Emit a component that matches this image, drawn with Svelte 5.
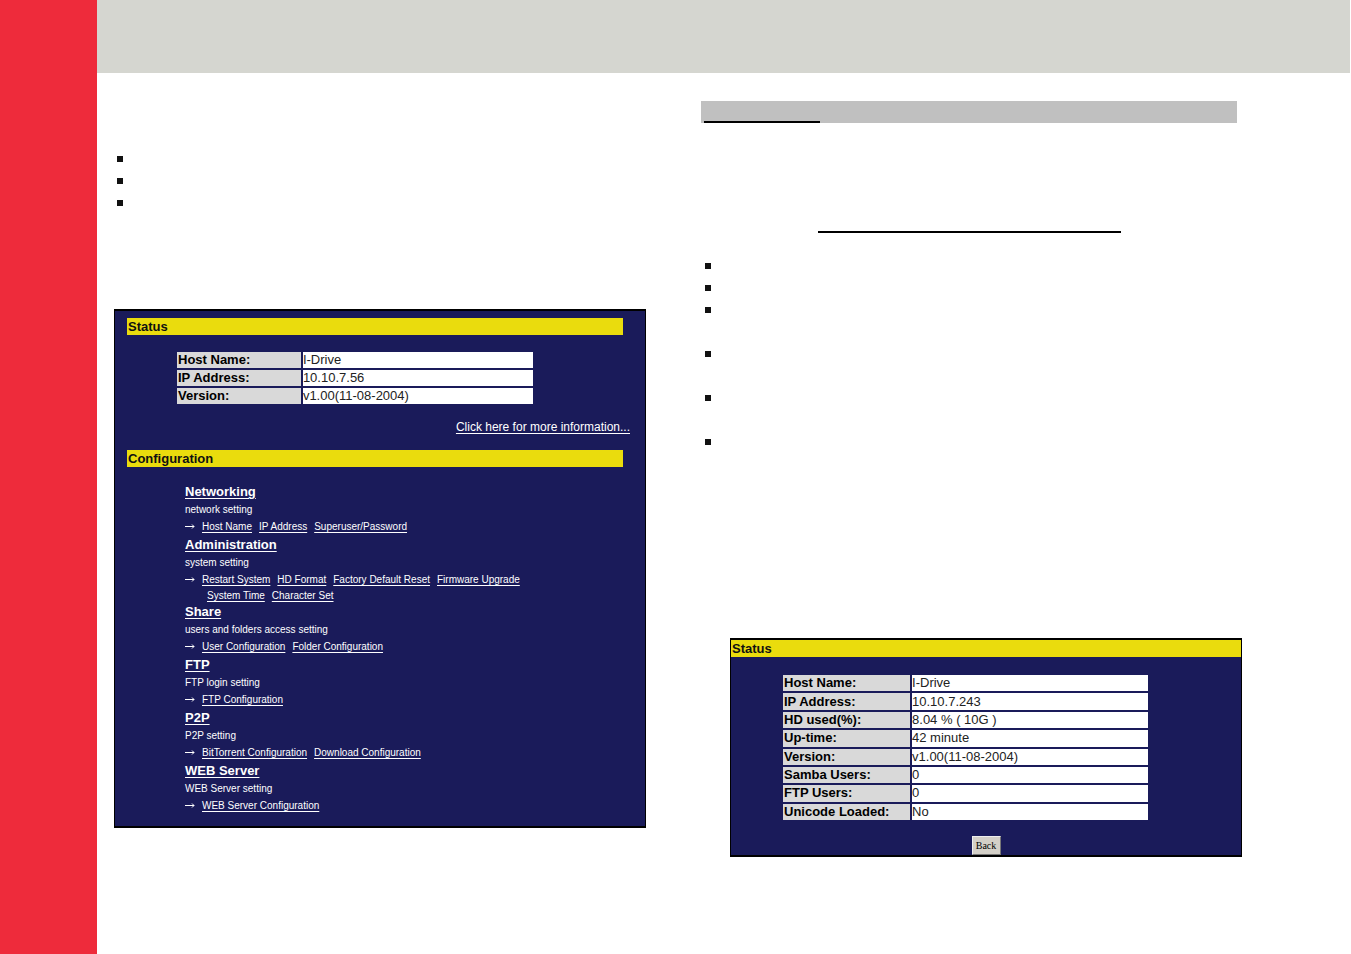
<script>
  const summary = [
    ['Host Name:', 'I-Drive'],
    ['IP Address:', '10.10.7.56'],
    ['Version:', 'v1.00(11-08-2004)']
  ];

  const details = [
    ['Host Name:', 'I-Drive'],
    ['IP Address:', '10.10.7.243'],
    ['HD used(%):', '8.04 % ( 10G )'],
    ['Up-time:', '42 minute'],
    ['Version:', 'v1.00(11-08-2004)'],
    ['Samba Users:', '0'],
    ['FTP Users:', '0'],
    ['Unicode Loaded:', 'No']
  ];

  const sections = [
    { title: 'Networking', about: 'network setting', links: ['Host Name', 'IP Address', 'Superuser/Password'] },
    {
      title: 'Administration',
      about: 'system setting',
      links: ['Restart System', 'HD Format', 'Factory Default Reset', 'Firmware Upgrade'],
      more: ['System Time', 'Character Set']
    },
    { title: 'Share', about: 'users and folders access setting', links: ['User Configuration', 'Folder Configuration'] },
    { title: 'FTP', about: 'FTP login setting', links: ['FTP Configuration'] },
    { title: 'P2P', about: 'P2P setting', links: ['BitTorrent Configuration', 'Download Configuration'] },
    { title: 'WEB Server', about: 'WEB Server setting', links: ['WEB Server Configuration'] }
  ];
</script>

<div class="page">
  <aside class="rail"></aside>
  <div class="body">
    <header class="band"></header>
    <main class="columns">
      <section class="column">
        <ul class="bullets first">
          <li></li>
          <li></li>
          <li></li>
        </ul>

        <div class="panel home">
          <h2 class="bar">Status</h2>
          <table class="facts">
            <tbody>
              {#each summary as [label, value]}
                <tr><th scope="row">{label}</th><td>{value}</td></tr>
              {/each}
            </tbody>
          </table>
          <a class="info" href="#status">Click here for more information...</a>
          <h2 class="bar">Configuration</h2>
          <nav class="config">
            {#each sections as section}
              <h3><a href="#{section.title}">{section.title}</a></h3>
              <p>{section.about}</p>
              <div class="links">
                <svg viewBox="0 0 10 9" width="10" height="9" aria-hidden="true">
                  <path d="M0 3.5H9M7 1.5L9 3.5L7 5.5" fill="none" stroke="currentColor" />
                </svg>
                {#each section.links as link}<a href="#{link}">{link}</a>{/each}
              </div>
              {#if section.more}
                <div class="links more">
                  {#each section.more as link}<a href="#{link}">{link}</a>{/each}
                </div>
              {/if}
            {/each}
          </nav>
        </div>
      </section>

      <section class="column">
        <div class="strip"><span></span></div>
        <div class="rule"></div>
        <ul class="bullets second">
          <li></li>
          <li></li>
          <li class="tall"></li>
          <li class="tall"></li>
          <li class="tall"></li>
          <li></li>
        </ul>

        <div class="panel status" id="status">
          <h2 class="bar">Status</h2>
          <table class="facts">
            <tbody>
              {#each details as [label, value]}
                <tr><th scope="row">{label}</th><td>{value}</td></tr>
              {/each}
            </tbody>
          </table>
          <button type="button">Back</button>
        </div>
      </section>
    </main>
  </div>
</div>

<style>
  :global(body) {
    margin: 0;
    background: #fff;
  }

  .page {
    display: flex;
    min-height: 100vh;
    font-family: "Liberation Sans", Arial, sans-serif;
    font-size: 13px;
    color: #000;
  }

  .rail {
    flex: 0 0 97px;
    background: #ee2b3b;
  }

  .body {
    flex: 1;
    min-width: 0;
    padding-right: 1px;
  }

  .band {
    height: 73px;
    background: #d5d6d0;
  }

  .columns {
    display: grid;
    grid-template-columns: minmax(0, 532fr) minmax(0, 541fr);
    column-gap: 55px;
    padding: 28px 108px 0 17px;
  }

  .bullets {
    list-style: none;
    margin: 0;
    padding: 0;
  }

  .bullets li {
    height: 22px;
  }

  .bullets li.tall {
    height: 44px;
  }

  .bullets li::before {
    content: "";
    display: block;
    width: 6px;
    height: 6px;
    background: #111;
  }

  .first {
    padding: 55px 0 87px 3px;
  }

  .second {
    padding: 30px 0 177px 4px;
  }

  .strip {
    height: 22px;
    margin-right: 5px;
    padding-left: 3px;
    display: flex;
    align-items: flex-end;
    background: #c0c0c0;
  }

  .strip span {
    width: 116px;
    height: 2px;
    background: #000;
  }

  .rule {
    height: 2px;
    margin: 108px 121px 0 117px;
    background: #000;
  }

  .panel {
    display: flex;
    flex-direction: column;
    box-sizing: border-box;
    background: #1a1b5a;
    border: 1px solid #000;
    border-width: 2px 1px;
    color: #fff;
  }

  .bar {
    margin: 0;
    padding-left: 1px;
    font-size: 13px;
    line-height: 17px;
    color: #111;
    background: #eadc0d;
  }

  .facts {
    border-collapse: separate;
    border-spacing: 2px;
    table-layout: fixed;
    color: #000;
  }

  .facts th,
  .facts td {
    padding: 0;
    line-height: 16px;
    text-align: left;
  }

  .facts th {
    width: 35%;
    background: #d9d9d9;
  }

  .facts td {
    background: #fff;
    color: #222;
  }

  a {
    color: inherit;
    text-decoration: underline;
    text-underline-offset: 2px;
  }

  .home {
    padding: 7px 0 11px;
  }

  .home .bar {
    margin: 0 22px 0 12px;
  }

  .home .facts {
    margin: 15px 110px 0 60px;
  }

  .info {
    align-self: flex-end;
    margin: 13px 15px 15px 0;
    font-size: 12px;
    line-height: 16px;
  }

  .config {
    padding: 16px 20px 0 70px;
    font-size: 10px;
  }

  .config h3 {
    margin: 0;
    font-size: 13px;
    line-height: 18px;
  }

  .config p {
    margin: 0;
    line-height: 17px;
  }

  .links {
    display: flex;
    align-items: center;
    gap: 7px;
    line-height: 18px;
  }

  .links.more {
    padding-left: 22px;
    line-height: 14px;
  }

  .status {
    margin: 0 0 0 29px;
  }

  .status .facts {
    height: 149px;
    margin: 16px 91px 0 50px;
  }

  .facts th {
    padding-left: 1px;
  }

  button {
    align-self: center;
    width: 29px;
    height: 19px;
    margin: 14px 0 0;
    padding: 0;
    border: 1px solid;
    border-color: #eee #777 #777 #eee;
    background: #d4d0c8;
    color: #000;
    font: 10px/16px "Liberation Serif", "Times New Roman", serif;
  }
</style>
